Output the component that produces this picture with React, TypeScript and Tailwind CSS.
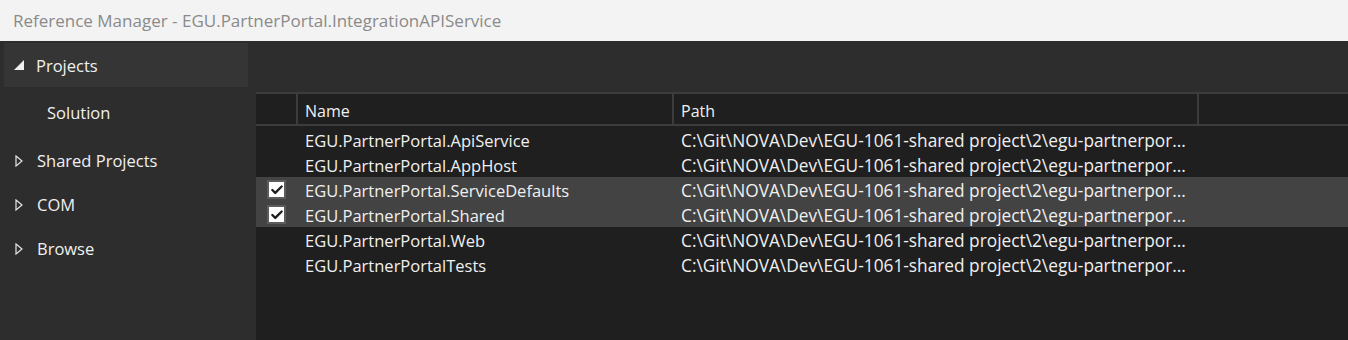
import { Check } from 'lucide-react';

type Row = { name: string; checked: boolean };

const rows: Row[] = [
  { name: 'EGU.PartnerPortal.ApiService', checked: false },
  { name: 'EGU.PartnerPortal.AppHost', checked: false },
  { name: 'EGU.PartnerPortal.ServiceDefaults', checked: true },
  { name: 'EGU.PartnerPortal.Shared', checked: true },
  { name: 'EGU.PartnerPortal.Web', checked: false },
  { name: 'EGU.PartnerPortalTests', checked: false },
];

const path = 'C:\\Git\\NOVA\\Dev\\EGU-1061-shared project\\2\\egu-partnerpor...';

function Collapsed() {
  return (
    <svg width="8" height="12" viewBox="0 0 8 12" className="shrink-0">
      <path d="M1 1 L7 6 L1 11 Z" fill="none" stroke="#e6e6e6" strokeWidth="1.2" />
    </svg>
  );
}

function Expanded() {
  return (
    <svg width="10" height="10" viewBox="0 0 10 10" className="shrink-0">
      <path d="M10 0 L10 10 L0 10 Z" fill="#f0f0f0" />
    </svg>
  );
}

function NavItem({ label }: { label: string }) {
  return (
    <div className="flex h-[44px] items-center gap-[14px] pl-[15px]">
      <Collapsed />
      <span className="pt-[1px]">{label}</span>
    </div>
  );
}

export default function App() {
  return (
    <div
      className="flex h-[340px] w-[1348px] flex-col overflow-hidden bg-[#2d2d2d] text-[16.5px] text-[#f0f0f0]"
      style={{ fontFamily: '"Open Sans", "Noto Sans", sans-serif' }}
    >
      <div className="flex h-[41px] shrink-0 items-center bg-[#f3f3f3] pl-[13px] text-[17px] text-[#8a8a8a]">
        Reference Manager - EGU.PartnerPortal.IntegrationAPIService
      </div>

      <div className="flex min-h-0 flex-1">
        {/* left nav */}
        <div className="w-[256px] shrink-0 pt-[2px]">
          <div className="ml-[4px] flex h-[44px] w-[244px] items-center gap-[12px] bg-[#353535] pl-[10px]">
            <Expanded />
            <span className="pt-[3px]">Projects</span>
          </div>
          <div className="flex h-[52px] items-center pl-[47px]">Solution</div>
          <NavItem label="Shared Projects" />
          <NavItem label="COM" />
          <NavItem label="Browse" />
        </div>

        {/* grid */}
        <div className="flex min-w-0 flex-1 flex-col pt-[51px]">
          <div className="flex flex-1 flex-col bg-[#1f1f1f]">
            <div className="flex h-[34px] border-y-2 border-[#3c3c3c] text-[16px]">
              <div className="w-[42px] shrink-0 border-r-2 border-[#3c3c3c]" />
              <div className="flex w-[376px] shrink-0 items-center border-r-2 border-[#3c3c3c] pl-[7px] pt-[3px]">
                Name
              </div>
              <div className="flex w-[525px] shrink-0 items-center border-r-2 border-[#3c3c3c] pl-[7px] pt-[3px]">
                Path
              </div>
              <div className="flex-1" />
            </div>
            <div className="pt-[1px]">
              {rows.map((r) => (
                <div
                  key={r.name}
                  className={`flex h-[25px] items-center ${r.checked ? 'bg-[#434343]' : ''}`}
                >
                  <div className="flex w-[43px] shrink-0 items-center pl-[11px]">
                    {r.checked && (
                      <div className="flex h-[19px] w-[19px] items-center justify-center border-2 border-[#5c5c5c] bg-white">
                        <Check size={14} strokeWidth={4} color="#1e1e1e" />
                      </div>
                    )}
                  </div>
                  <div className="w-[376px] shrink-0 pl-[6px] pt-[3px]">{r.name}</div>
                  <div className="pl-[6px] pt-[3px] text-[17.3px]">{path}</div>
                </div>
              ))}
            </div>
          </div>
        </div>
      </div>
    </div>
  );
}
